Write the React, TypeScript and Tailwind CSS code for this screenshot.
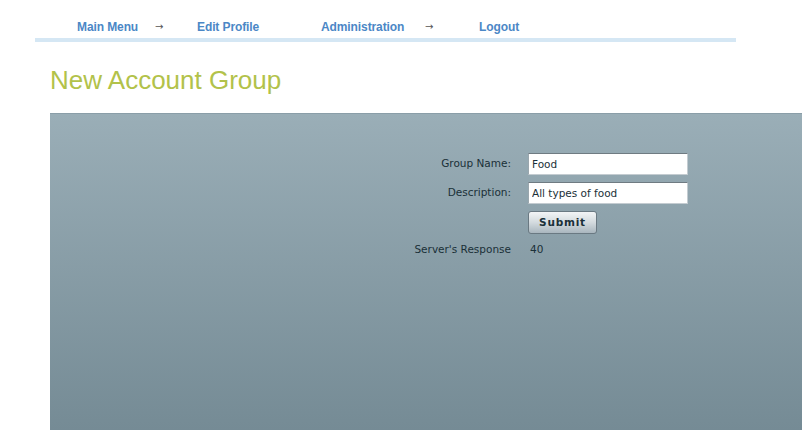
import React from 'react';

// Navigation entries with the column width each takes in the bar
const navItems = [
  { label: 'Main Menu', width: 'w-[78px]', link: true },
  { label: '→', width: 'w-[42px]', link: false },
  { label: 'Edit Profile', width: 'w-[124px]', link: true },
  { label: 'Administration', width: 'w-[104px]', link: true },
  { label: '→', width: 'w-[54px]', link: false },
  { label: 'Logout', width: 'w-[60px]', link: true },
];

const App: React.FC = () => {
  return (
    <div className="w-[802px] h-[430px] overflow-hidden bg-white font-['Liberation_Sans',Arial,sans-serif]">
      {/* Top navigation */}
      <div className="ml-[35px] w-[701px] border-b-4 border-[#d5e7f4]">
        <div className="flex pl-[42px] pt-[20px] pb-[4px] leading-[14px]">
          {navItems.map((item, i) =>
            item.link ? (
              <a key={i} className={`${item.width} text-[12px] font-bold text-[#4b87c6] tracking-[-0.1px] cursor-pointer`}>
                {item.label}
              </a>
            ) : (
              <span key={i} className={`${item.width} font-['DejaVu_Sans',sans-serif] text-[10px] text-[#555]`}>
                {item.label}
              </span>
            )
          )}
        </div>
      </div>

      {/* Page title */}
      <h1 className="ml-[50px] mt-[23px] h-[48px] text-[26px] leading-[30px] text-[#b2c24a]">
        New Account Group
      </h1>

      {/* Applet panel */}
      <div className="ml-[50px] h-[317px] bg-gradient-to-b from-[#9aaeb7] to-[#758b95] border-t border-[#8a9ea8] pt-[39px] font-['DejaVu_Sans',sans-serif] text-[10.5px] text-[#1a3038]">
        <div className="grid grid-cols-[461px_160px] gap-x-[17px] gap-y-[7px] items-center">
          <label className="text-right">Group Name:</label>
          <input
            defaultValue="Food"
            className="h-[22px] bg-white border border-[#c4ccd1] border-t-[#6f7b82] border-l-[#9aa6ad] px-[3px] text-[10.5px] text-[#1a3038] outline-none"
          />

          <label className="text-right">Description:</label>
          <input
            defaultValue="All types of food"
            className="h-[22px] bg-white border border-[#c4ccd1] border-t-[#6f7b82] border-l-[#9aa6ad] px-[3px] text-[10.5px] text-[#1a3038] outline-none"
          />

          <span />
          <div>
            <button className="w-[69px] h-[23px] rounded-[3px] border border-[#6a7982] bg-gradient-to-b from-[#f3f5f6] via-[#d3dade] to-[#a9b6be] font-bold text-[10.5px] text-[#1a3038] tracking-[0.8px]">
              Submit
            </button>
          </div>

          <span className="text-right mt-[1px]">Server's Response</span>
          <span className="pl-[2px] mt-[1px]">40</span>
        </div>
      </div>
    </div>
  );
};

export default App;
